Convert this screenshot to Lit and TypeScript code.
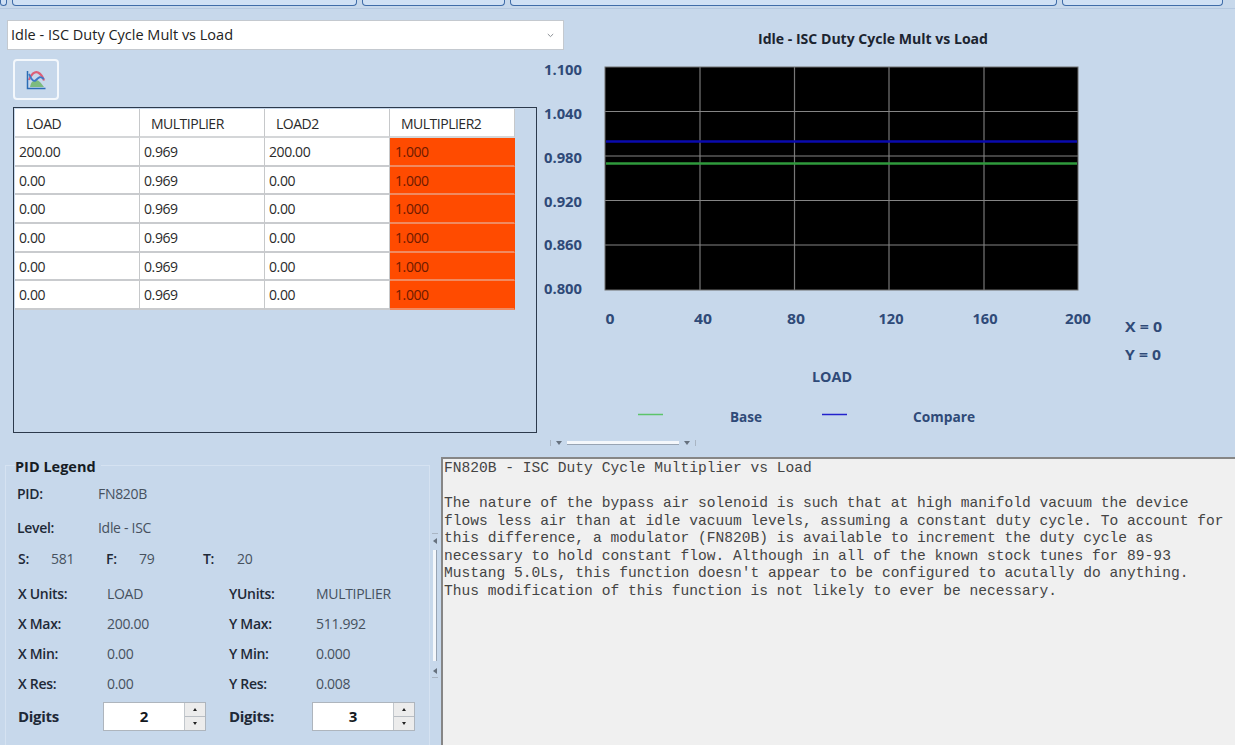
import { LitElement, html, css, svg } from "lit";
import { customElement } from "lit/decorators.js";

const TAB_WIDTHS = [7, 345, 143, 547, 161];

const ROWS = [
  ["200.00", "0.969", "200.00", "1.000"],
  ["0.00", "0.969", "0.00", "1.000"],
  ["0.00", "0.969", "0.00", "1.000"],
  ["0.00", "0.969", "0.00", "1.000"],
  ["0.00", "0.969", "0.00", "1.000"],
  ["0.00", "0.969", "0.00", "1.000"],
];

const Y_LABELS = [
  ["1.100", 75],
  ["1.040", 119],
  ["0.980", 163],
  ["0.920", 207],
  ["0.860", 250],
  ["0.800", 294],
] as const;

const X_LABELS = [
  ["0", 610, 9],
  ["40", 703, 18],
  ["80", 796, 18],
  ["120", 891, 25],
  ["160", 985, 25],
  ["200", 1078, 26],
] as const;

const X_GRID = [700, 794.5, 889, 984];
const Y_GRID = [111.5, 156, 200.5, 245];

const DESCRIPTION = `FN820B - ISC Duty Cycle Multiplier vs Load

The nature of the bypass air solenoid is such that at high manifold vacuum the device
flows less air than at idle vacuum levels, assuming a constant duty cycle. To account for
this difference, a modulator (FN820B) is available to increment the duty cycle as
necessary to hold constant flow. Although in all of the known stock tunes for 89-93
Mustang 5.0Ls, this function doesn't appear to be configured to acutally do anything.
Thus modification of this function is not likely to ever be necessary.`;

@customElement("app-root")
export class AppRoot extends LitElement {
  static styles = css`
    :host {
      display: block;
      width: 1235px;
      height: 745px;
      overflow: hidden;
      background: #c7d8eb;
      font-family: "Open Sans", "Liberation Sans", sans-serif;
      font-size: 14px;
      color: #26303c;
    }

    .tabs {
      display: flex;
      gap: 5px;
      height: 9px;
      border-bottom: 1px solid #b4c8e0;
      box-sizing: border-box;
    }

    .tab {
      height: 6px;
      box-sizing: border-box;
      border: 1px solid #3f6ca8;
      border-top: none;
      border-radius: 0 0 4px 4px;
      background: #cfe0f4;
    }

    .top {
      display: grid;
      grid-template-columns: 540px 695px;
      height: 428px;
    }

    .left {
      padding: 11px 0 0 7px;
      min-width: 0;
    }

    .select {
      width: 557px;
      height: 30px;
      box-sizing: border-box;
      background: #fff;
      border: 1px solid #c4c9cf;
      display: flex;
      align-items: center;
      justify-content: space-between;
      padding: 0 9px 2px 3px;
      font-size: 14.5px;
      color: #222;
      position: relative;
      z-index: 1;
    }

    .select svg {
      display: block;
      margin-top: 2px;
    }

    .icon-btn {
      width: 46px;
      height: 41px;
      box-sizing: border-box;
      margin: 9px 0 7px 6px;
      border: 2px solid #f4f8fc;
      border-radius: 4px;
      display: flex;
      align-items: center;
      justify-content: center;
    }

    .grid-box {
      width: 524px;
      height: 326px;
      box-sizing: border-box;
      margin-left: 6px;
      border: 1px solid #2c3a4c;
      padding: 1px 0 0 1px;
    }

    .grid {
      display: grid;
      grid-template-columns: repeat(4, 125px);
      grid-template-rows: 29px;
      grid-auto-rows: 28.7px;
    }

    .cell {
      background: #fff;
      display: flex;
      align-items: center;
      box-sizing: border-box;
      border-right: 1px solid #c6c8ca;
      border-bottom: 2px solid #c9cbce;
      padding-left: 4px;
      font-size: 14px;
      color: #2a2a2a;
      letter-spacing: -0.4px;
    }

    .cell.head {
      padding: 2px 0 0 11px;
      border-bottom-color: #d4d6d8;
      letter-spacing: -0.5px;
    }

    .cell.hot {
      background: #ff4b00;
      color: #6e1a00;
      padding-left: 5px;
      border-right-color: #ff4b00;
      border-bottom-color: #f08a60;
    }

    .chart {
      display: block;
    }

    .chart text {
      font-family: "Open Sans", "Liberation Sans", sans-serif;
      font-weight: 700;
      fill: #2f4a78;
    }

    .chart .title {
      fill: #1c2430;
    }

    .h-split {
      width: 146px;
      height: 10px;
      margin: 1px 0 -1px 550px;
      display: flex;
      align-items: center;
      gap: 4px;
    }

    .h-split::before,
    .h-split::after {
      content: "";
      flex: none;
      width: 1px;
      height: 6px;
      background: #a9b5c3;
    }

    .h-split i {
      flex: none;
      width: 0;
      height: 0;
      margin: 0 1px;
      border-left: 3px solid transparent;
      border-right: 3px solid transparent;
      border-top: 4px solid #66717e;
    }

    .h-split b {
      flex: 1;
      height: 3px;
      background: #f4f7fb;
      border-bottom: 1px solid #98a4b3;
    }

    .bottom {
      display: grid;
      grid-template-columns: 430px 11px 1fr;
      height: 308px;
    }

    .legend {
      margin: 6px 0 0 5px;
      padding: 0 0 0 12px;
      height: 320px;
      min-width: 0;
      box-sizing: border-box;
      border: 1px solid #d5e2f1;
    }

    .legend legend {
      margin-left: -3px;
      padding: 4px 5px 0 0;
      font-weight: 700;
      font-size: 14.5px;
      color: #161c24;
      line-height: 20px;
    }

    .lbl {
      font-weight: 600;
      color: #1e2937;
      letter-spacing: -0.3px;
    }

    .val {
      color: #46515e;
      letter-spacing: -0.3px;
    }

    .id-row {
      display: grid;
      grid-template-columns: 81px 1fr;
      align-items: center;
      height: 34px;
      margin-left: -1px;
    }

    .id-row:first-of-type {
      margin-top: -1px;
    }

    .stats {
      display: grid;
      grid-template-columns: 33px 55px 33px 64px 34px 1fr;
      align-items: center;
      height: 29px;
    }

    .ranges {
      display: grid;
      grid-template-columns: 89px 122px 87px 1fr;
      grid-auto-rows: 30px;
      align-items: center;
      margin-top: 5px;
    }

    .ranges .digits {
      font-size: 15px;
      font-weight: 700;
      margin-top: 6px;
    }

    .spin {
      width: 103px;
      height: 29px;
      box-sizing: border-box;
      margin: 7px 0 0 -4px;
      border: 1px solid #aeb5bd;
      display: flex;
      background: #fff;
    }

    .spin span {
      flex: 1;
      text-align: center;
      font-weight: 700;
      font-size: 15px;
      line-height: 26px;
      color: #14181e;
    }

    .spin div {
      width: 20px;
      display: grid;
      grid-template-rows: 1fr 1fr;
      gap: 1px;
      background: #b9bec4;
      border-left: 1px solid #c2c7cc;
    }

    .spin em {
      display: flex;
      align-items: center;
      justify-content: center;
      background: #ececec;
    }

    .spin em::after {
      content: "";
      border-left: 2.5px solid transparent;
      border-right: 2.5px solid transparent;
    }

    .spin em.up::after {
      border-bottom: 3px solid #222;
    }

    .spin em.down::after {
      border-top: 3px solid #222;
    }

    .v-split {
      display: flex;
      flex-direction: column;
      align-items: center;
      gap: 3px;
      box-sizing: border-box;
      width: 6px;
      height: 145px;
      margin: 86px 0 0 2px;
      border-top: 1px solid #a9b5c3;
      border-bottom: 1px solid #a9b5c3;
    }

    .v-split i {
      flex: none;
      width: 0;
      height: 0;
      margin: 4px 0 3px;
      border-top: 3px solid transparent;
      border-bottom: 3px solid transparent;
      border-right: 4px solid #66717e;
    }

    .v-split b {
      flex: 1;
      width: 3px;
      background: #f4f7fb;
      border-right: 1px solid #98a4b3;
    }

    .desc {
      margin: 10px 0 0 0;
      box-sizing: border-box;
      background: #f0f0f0;
      border-top: 2px solid #868686;
      border-left: 2px solid #868686;
      padding: 1px 0 0 1px;
      font-family: "Liberation Mono", monospace;
      font-size: 14.6px;
      line-height: 17.5px;
      color: #444;
      white-space: pre;
      overflow: hidden;
    }
  `;

  private chart() {
    return html`<svg class="chart" width="695" height="428" viewBox="540 9 695 428">
      <text class="title" x="758" y="44" font-size="15" textLength="230" lengthAdjust="spacingAndGlyphs">Idle - ISC Duty Cycle Mult vs Load</text>
      ${Y_LABELS.map(
        ([t, y]) => svg`<text x="544" y=${y} font-size="14.5" textLength="38" lengthAdjust="spacingAndGlyphs">${t}</text>`
      )}
      <rect x="605" y="67" width="473" height="223" fill="#000" />
      ${X_GRID.map((x) => svg`<line x1=${x} x2=${x} y1="67" y2="290" stroke="#777" stroke-width="1.2" />`)}
      ${Y_GRID.map((y) => svg`<line x1="605" x2="1078" y1=${y} y2=${y} stroke="#858585" />`)}
      <rect x="605" y="67" width="473" height="223" fill="none" stroke="#6f6f6f" />
      <line x1="606" x2="1077" y1="141.5" y2="141.5" stroke="#0a0aae" stroke-width="2.6" />
      <line x1="606" x2="1077" y1="163.5" y2="163.5" stroke="#2f9a3c" stroke-width="2.6" />
      ${X_LABELS.map(
        ([t, x, w]) => svg`<text x=${x - w / 2} y="324" font-size="14.5" textLength=${w} lengthAdjust="spacingAndGlyphs">${t}</text>`
      )}
      <text x="1125" y="332" font-size="15" textLength="37" lengthAdjust="spacingAndGlyphs">X = 0</text>
      <text x="1125" y="360" font-size="15" textLength="36" lengthAdjust="spacingAndGlyphs">Y = 0</text>
      <text x="812" y="382" font-size="14.5" textLength="40" lengthAdjust="spacingAndGlyphs">LOAD</text>
      <line x1="638" x2="663" y1="414.5" y2="414.5" stroke="#5cc46a" stroke-width="1.5" />
      <text x="730" y="422" font-size="14.5" textLength="32" lengthAdjust="spacingAndGlyphs">Base</text>
      <line x1="822" x2="847" y1="414.5" y2="414.5" stroke="#2222cc" stroke-width="1.5" />
      <text x="913" y="422" font-size="14.5" textLength="62" lengthAdjust="spacingAndGlyphs">Compare</text>
    </svg>`;
  }

  private spin(value: string) {
    return html`<div class="spin">
      <span>${value}</span>
      <div><em class="up"></em><em class="down"></em></div>
    </div>`;
  }

  render() {
    return html`
      <div class="tabs">
        ${TAB_WIDTHS.map((w) => html`<div class="tab" style="width:${w}px"></div>`)}
      </div>

      <div class="top">
        <div class="left">
          <div class="select">
            <span>Idle - ISC Duty Cycle Mult vs Load</span>
            <svg width="7" height="5" viewBox="0 0 7 5"><path d="M.8 1l2.7 2.6L6.2 1" fill="none" stroke="#8b8f94" /></svg>
          </div>
          <div class="icon-btn">
            <svg width="20" height="20" viewBox="0 0 20 20" fill="none">
              <path d="M4 17c1-5 3-7 6-7s5 3 8 7z" fill="#7dbb7f" />
              <path d="M3 10C5 4 9 1 12 2.500s5 5 6 8" stroke="#dc5f78" stroke-width="2.200" />
              <path d="M3 4c2 4 4 9 7 6s4-4 8-1" stroke="#3d78c8" stroke-width="1.800" />
              <path d="M1.500 1v17.500H19.500" stroke="#2b6cb5" stroke-width="1.500" />
            </svg>
          </div>
          <div class="grid-box">
            <div class="grid">
              ${["LOAD", "MULTIPLIER", "LOAD2", "MULTIPLIER2"].map((h) => html`<div class="cell head">${h}</div>`)}
              ${ROWS.map((row) =>
                row.map((v, i) => html`<div class="cell ${i === 3 ? "hot" : ""}">${v}</div>`)
              )}
            </div>
          </div>
        </div>
        ${this.chart()}
      </div>

      <div class="h-split"><i></i><b></b><i></i></div>

      <div class="bottom">
        <fieldset class="legend">
          <legend>PID Legend</legend>
          <div class="id-row"><span class="lbl">PID:</span><span class="val">FN820B</span></div>
          <div class="id-row"><span class="lbl">Level:</span><span class="val">Idle - ISC</span></div>
          <div class="stats">
            <span class="lbl">S:</span><span class="val">581</span>
            <span class="lbl">F:</span><span class="val">79</span>
            <span class="lbl">T:</span><span class="val">20</span>
          </div>
          <div class="ranges">
            <span class="lbl">X Units:</span><span class="val">LOAD</span>
            <span class="lbl">YUnits:</span><span class="val">MULTIPLIER</span>
            <span class="lbl">X Max:</span><span class="val">200.00</span>
            <span class="lbl">Y Max:</span><span class="val">511.992</span>
            <span class="lbl">X Min:</span><span class="val">0.00</span>
            <span class="lbl">Y Min:</span><span class="val">0.000</span>
            <span class="lbl">X Res:</span><span class="val">0.00</span>
            <span class="lbl">Y Res:</span><span class="val">0.008</span>
            <span class="lbl digits">Digits</span>${this.spin("2")}
            <span class="lbl digits">Digits:</span>${this.spin("3")}
          </div>
        </fieldset>
        <div class="v-split"><i></i><b></b><i></i></div>
        <div class="desc">${DESCRIPTION}</div>
      </div>
    `;
  }
}
